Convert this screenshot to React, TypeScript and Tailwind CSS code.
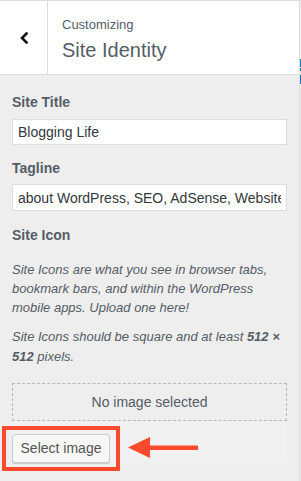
import React from "react";

export default function App() {
  return (
    <div className="w-[301px] h-[481px] flex bg-[#eeeeee] overflow-hidden font-['Liberation_Sans',Arial,sans-serif]">
      <div className="w-[300px] border-r border-[#dddddd] flex flex-col">
        <div className="h-[75px] bg-white border-t border-b border-[#dddddd] flex">
          <div className="w-[48px] border-r border-[#dddddd] flex items-center justify-center">
            <svg width="10" height="12" viewBox="0 0 10 12">
              <polyline points="7.5,1.5 3,6 7.5,10.5" fill="none" stroke="#111" strokeWidth="2.6" strokeLinecap="square" />
            </svg>
          </div>
          <div className="pl-[14px] pt-[15px] flex flex-col">
            <div className="text-[13px] leading-[18px] text-[#555d66]">Customizing</div>
            <div className="mt-[3px] text-[20px] font-light leading-[26px] text-[#555d66]">Site Identity</div>
          </div>
        </div>
        <div className="px-[12px] pt-[17px] flex flex-col">
          <div className="text-[14px] font-bold leading-[20px] text-[#555d66]">Site Title</div>
          <input
            readOnly
            value="Blogging Life"
            className="mt-[7px] h-[26px] w-full bg-white border border-[#dddddd] px-[5px] text-[14px] text-[#32373c] outline-none"
          />
          <div className="mt-[13px] text-[14px] font-bold leading-[20px] text-[#555d66]">Tagline</div>
          <input
            readOnly
            value="about WordPress, SEO, AdSense, Websites and Blogging"
            className="mt-[6px] h-[27px] w-full bg-white border border-[#dddddd] px-[5px] text-[14px] text-[#32373c] outline-none"
          />
          <div className="mt-[14px] text-[14px] font-bold leading-[20px] text-[#555d66]">Site Icon</div>
          <p className="mt-[15px] text-[13px] italic leading-[19px] text-[#555d66]">
            Site Icons are what you see in browser tabs, bookmark bars, and within the WordPress mobile apps. Upload one here!
          </p>
          <p className="mt-[10px] text-[13px] italic leading-[20px] text-[#555d66]">
            Site Icons should be square and at least <b>512 × 512</b> pixels.
          </p>
          <div className="mt-[16px] h-[38px] border border-dashed border-[#b4b9be] flex items-center justify-center text-[14px] text-[#555d66]">
            No image selected
          </div>
          <div className="h-[42px] bg-[#f1f1f1] flex items-end">
            <div className="relative">
              <button className="h-[29px] w-[98px] bg-[#f7f7f7] border border-[#cccccc] rounded-[3px] shadow-[0_1px_0_#cccccc] text-[14px] text-[#555555]">
                Select image
              </button>
              <div className="absolute -left-[10px] -top-[8px] -right-[10px] -bottom-[8px] border-[4px] border-[#fb4a2e]" />
              <svg className="absolute left-[116px] top-[3px]" width="70" height="21" viewBox="0 0 70 21">
                <polygon points="0,10.5 22,0 22,21" fill="#fb4a2e" />
                <rect x="21" y="8.5" width="49" height="4.5" fill="#fb4a2e" />
              </svg>
            </div>
          </div>
        </div>
      </div>
      <div className="w-px flex flex-col">
        <div className="mt-[59px] h-[8px] bg-[#0085ba]" />
        <div className="mt-[1px] h-[3px] bg-[#0085ba]" />
        <div className="mt-[4px] h-[9px] bg-[#0085ba]" />
      </div>
    </div>
  );
}
